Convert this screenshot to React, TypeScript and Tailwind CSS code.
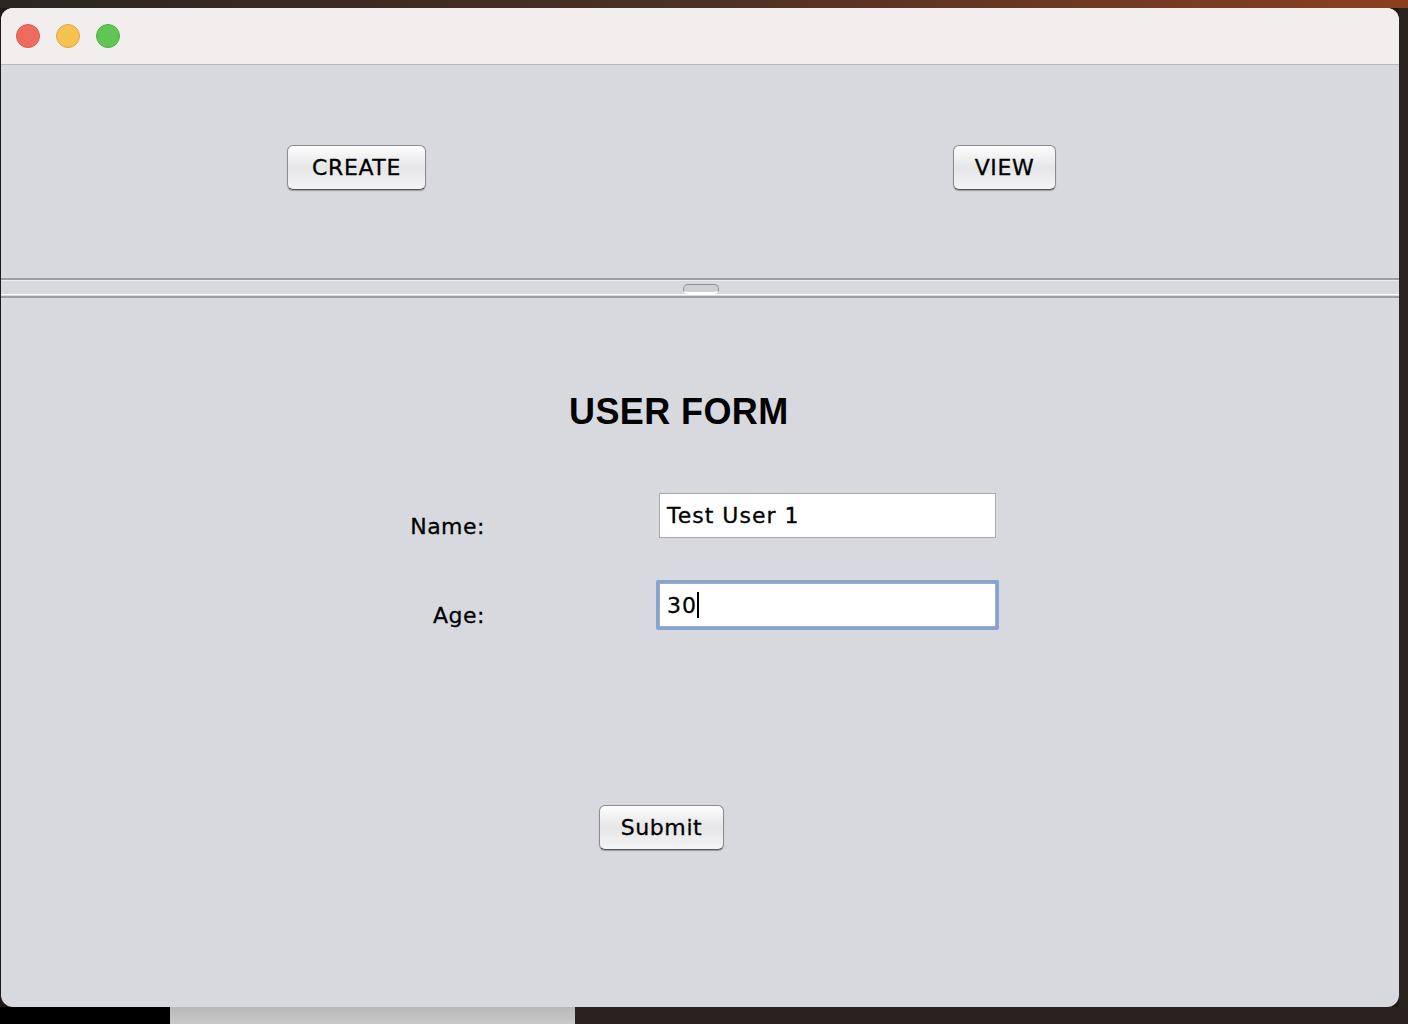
import React from "react";

// Swing-style user form window on a macOS desktop.

const FONT = { fontFamily: '"DejaVu Sans", "Open Sans", sans-serif' };

function AquaButton({ label, className }: { label: string; className: string }) {
  return (
    <button
      style={FONT}
      className={`flex h-[45px] items-center justify-center rounded-[6px] border border-[#8c8c90] border-b-[#55555a] bg-gradient-to-b from-[#fdfdfd] via-[#e6e6e9] to-[#f4f4f6] text-[22px] tracking-[0.6px] text-black shadow-[0_1px_1px_rgba(0,0,0,0.3)] [-webkit-text-stroke:0.3px_black] ${className}`}
    >
      {label}
    </button>
  );
}

export default function App() {
  return (
    <div className="flex h-[1024px] w-[1408px] flex-col overflow-hidden bg-[#221917]">
      {/* desktop strip behind the window */}
      <div className="h-[8px] shrink-0 bg-gradient-to-r from-[#2b2620] via-[#4d3024] to-[#8c3f1f]" />

      <div className="flex">
        <div className="ml-[1px] flex h-[999px] w-[1398px] flex-col overflow-hidden rounded-[12px] bg-[#d8d9de]">
          {/* title bar */}
          <div className="flex h-[57px] shrink-0 items-center gap-[16px] border-b border-[#b8b8bc] bg-[#f3eeee] pl-[15px]">
            <span className="h-[24px] w-[24px] rounded-full border border-[#dd5a50] bg-[#ee6b5f]" />
            <span className="h-[24px] w-[24px] rounded-full border border-[#dfa63d] bg-[#f5c251]" />
            <span className="h-[24px] w-[24px] rounded-full border border-[#4fae43] bg-[#61c554]" />
          </div>

          {/* top pane */}
          <div className="flex h-[213px] shrink-0 items-start pt-[80px]">
            <AquaButton label="CREATE" className="ml-[286px] w-[139px]" />
            <AquaButton label="VIEW" className="ml-[527px] w-[103px]" />
          </div>

          {/* split divider */}
          <div className="flex shrink-0 flex-col">
            <div className="h-[2px] bg-[#9d9ea3]" />
            <div className="h-[1px] bg-[#eeeef0]" />
            <div className="flex h-[13px] items-center justify-center">
              <div className="ml-[1px] mt-[2px] h-[10px] w-[36px] rounded-full border border-[#8f9095] border-b-[2px] border-b-white bg-[#cfd0d4]" />
            </div>
            <div className="h-[1px] bg-white" />
            <div className="h-[1px]" />
            <div className="h-[2px] bg-[#9d9ea3]" />
          </div>

          {/* form pane */}
          <div className="flex flex-1 flex-col">
            <h1
              style={{ fontFamily: '"Liberation Sans", Arial, sans-serif' }}
              className="mt-[94px] pl-[568px] text-[36px] font-bold leading-[40px] tracking-[0.4px] text-black"
            >
              USER FORM
            </h1>

            <div className="mt-[61px] flex items-end">
              <div style={FONT} className="mb-[-2px] w-[484px] text-right text-[22px] leading-[26px] tracking-[0.5px] text-black [-webkit-text-stroke:0.3px_black]">
                Name:
              </div>
              <div className="ml-[174px] flex h-[45px] w-[337px] items-center border border-[#a9a9ac] bg-white pl-[7px]">
                <span style={FONT} className="text-[22px] tracking-[1px] text-black [-webkit-text-stroke:0.3px_black]">Test User 1</span>
              </div>
            </div>

            <div className="mt-[42px] flex items-end">
              <div style={FONT} className="mb-[1px] w-[484px] text-right text-[22px] leading-[26px] tracking-[0.5px] text-black [-webkit-text-stroke:0.3px_black]">
                Age:
              </div>
              <div className="ml-[171px] rounded-[2px] border-[3px] border-[#80a5d6] bg-white">
                <div className="flex h-[44px] w-[337px] items-center border border-[#a9a9ac] bg-white pl-[7px]">
                  <span style={FONT} className="text-[22px] tracking-[1px] text-black [-webkit-text-stroke:0.3px_black]">30</span>
                  <span className="h-[26px] w-[2px] bg-black" />
                </div>
              </div>
            </div>

            <div className="mt-[175px] flex">
              <AquaButton label="Submit" className="ml-[598px] w-[125px]" />
            </div>
          </div>
        </div>
        <div className="h-[999px] flex-1 bg-[#2a2320]" />
      </div>

      {/* bottom desktop strip */}
      <div className="flex h-[17px] shrink-0">
        <div className="w-[170px] bg-black" />
        <div className="w-[405px] bg-gradient-to-b from-[#b8b8b8] to-[#c9c9c9]" />
        <div className="flex-1 bg-[#2a201e]" />
      </div>
    </div>
  );
}
